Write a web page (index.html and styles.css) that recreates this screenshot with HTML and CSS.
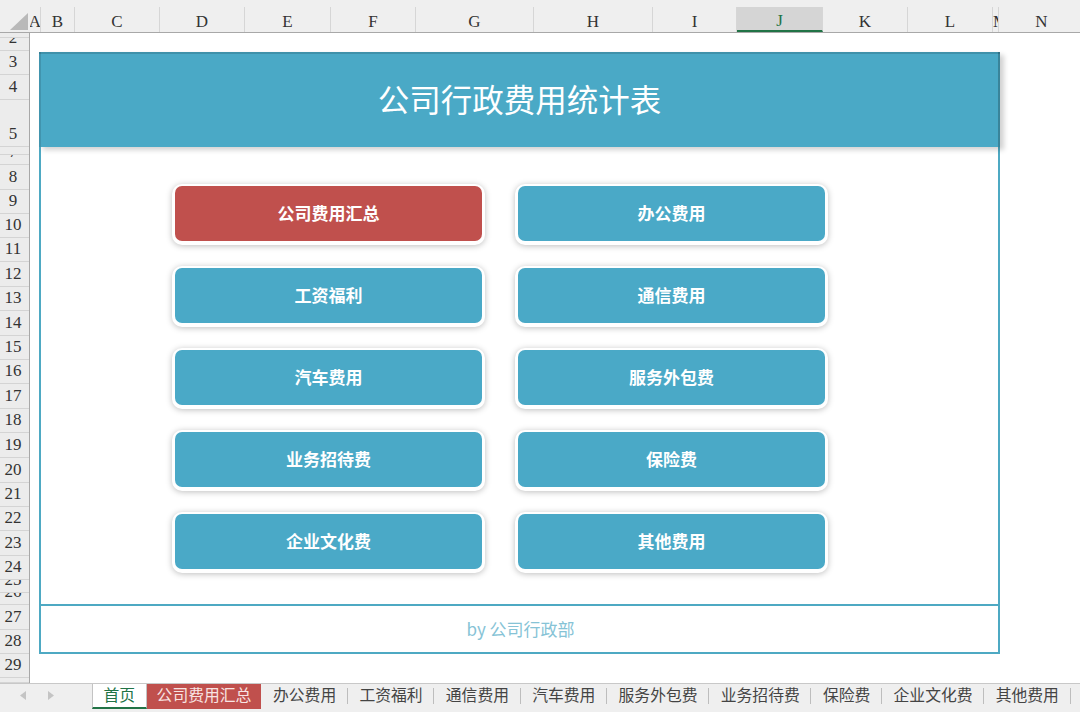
FILE: index.html
```html
<!DOCTYPE html>
<html lang="zh-CN">
<head>
<meta charset="utf-8">
<title>公司行政费用统计表</title>
<link rel="stylesheet" href="styles.css">
</head>
<body>
<div class="app">
  <div class="colhead">
    <div class="corner"><svg width="18" height="17" viewBox="0 0 18 17"><polygon points="18,0 18,17 0,17" fill="#b9b9b9"/></svg></div>
    <div class="col w11">A</div>
    <div class="col w34">B</div>
    <div class="col w85">C</div>
    <div class="col w85">D</div>
    <div class="col w86">E</div>
    <div class="col w85">F</div>
    <div class="col w118">G</div>
    <div class="col w119">H</div>
    <div class="col w84">I</div>
    <div class="col w86 selected">J</div>
    <div class="col w85">K</div>
    <div class="col w85">L</div>
    <div class="col w6">M</div>
    <div class="col w86">N</div>
  </div>
  <div class="main">
    <div class="rowhead">
      <div class="r h5">1</div>
      <div class="r h13">2</div>
      <div class="r h24">3</div>
      <div class="r h25">4</div>
      <div class="r h47">5</div>
      <div class="r h8">6</div>
      <div class="r h10">7</div>
      <div class="r h25">8</div>
      <div class="r h24">9</div>
      <div class="r h24">10</div>
      <div class="r h24">11</div>
      <div class="r h25">12</div>
      <div class="r h24">13</div>
      <div class="r h25">14</div>
      <div class="r h24">15</div>
      <div class="r h24">16</div>
      <div class="r h25">17</div>
      <div class="r h24">18</div>
      <div class="r h25">19</div>
      <div class="r h25">20</div>
      <div class="r h24">21</div>
      <div class="r h24">22</div>
      <div class="r h25">23</div>
      <div class="r h24">24</div>
      <div class="r h13">25</div>
      <div class="r h12">26</div>
      <div class="r h25">27</div>
      <div class="r h24">28</div>
      <div class="r h24">29</div>
      <div class="r h5">30</div>
    </div>
    <div class="canvas">
      <div class="board">
        <div class="banner"><h1>公司行政费用统计表</h1></div>
        <div class="panel">
          <div class="menu">
            <div class="btn red">公司费用汇总</div>
            <div class="btn">办公费用</div>
            <div class="btn">工资福利</div>
            <div class="btn">通信费用</div>
            <div class="btn">汽车费用</div>
            <div class="btn">服务外包费</div>
            <div class="btn">业务招待费</div>
            <div class="btn">保险费</div>
            <div class="btn">企业文化费</div>
            <div class="btn">其他费用</div>
          </div>
          <div class="foot">by 公司行政部</div>
        </div>
      </div>
    </div>
  </div>
  <div class="tabs">
    <div class="nav">
      <svg width="6" height="9" viewBox="0 0 6 9"><polygon points="6,0 6,9 0,4.5" fill="#c4c4c4"/></svg>
      <svg width="6" height="9" viewBox="0 0 6 9"><polygon points="0,0 0,9 6,4.5" fill="#c4c4c4"/></svg>
    </div>
    <div class="tab home">首页</div>
    <div class="tab active-red">公司费用汇总</div>
    <div class="tab">办公费用</div>
    <div class="tab">工资福利</div>
    <div class="tab">通信费用</div>
    <div class="tab">汽车费用</div>
    <div class="tab">服务外包费</div>
    <div class="tab">业务招待费</div>
    <div class="tab">保险费</div>
    <div class="tab">企业文化费</div>
    <div class="tab">其他费用</div>
  </div>
</div>
</body>
</html>
```
FILE: styles.css
```css
* { box-sizing: border-box; margin: 0; padding: 0; }
html, body { width: 1080px; height: 712px; overflow: hidden; background: #fff; }
body { font-family: "Noto Sans CJK SC", "Noto Sans", sans-serif; }

.app { display: grid; grid-template-rows: 33px 650px 29px; height: 712px; }

/* column header */
.colhead { display: flex; background: #efefef; border-bottom: 1px solid #a8a8a8; overflow: hidden; }
.corner { width: 30px; flex: none; display: flex; align-items: flex-end; justify-content: flex-end; padding: 0 2px 2px 0; }
.corner svg { display: block; }
.col { flex: none; height: 25px; margin-top: 7px; border-right: 1px solid #d6d6d6; display: flex; align-items: flex-end; justify-content: center; font: 17px/21px "Liberation Serif", serif; color: #333; overflow: hidden; }
.col.selected { background: #d5d5d5; border-bottom: 2px solid #217346; color: #217346; line-height: 19px; }
.w6 { width: 6px; justify-content: flex-start; }
.w11 { width: 11px; }
.w34 { width: 34px; }
.w84 { width: 84px; }
.w85 { width: 85px; }
.w86 { width: 86px; }
.w118 { width: 118px; }
.w119 { width: 119px; }

/* main sheet */
.main { display: flex; overflow: hidden; }
.rowhead { width: 30px; flex: none; background: #ececec; border-right: 1px solid #a8a8a8; display: flex; flex-direction: column; overflow: hidden; }
.r { flex: none; display: flex; align-items: flex-end; justify-content: center; padding-right: 3px; border-bottom: 1px solid #d4d4d4; overflow: hidden; font: 17px/24px "Liberation Serif", serif; color: #333; }
.h5 { height: 5px; }
.h8 { height: 8px; }
.h10 { height: 10px; }
.h12 { height: 12px; }
.h13 { height: 13px; }
.h24 { height: 24px; }
.h25 { height: 25px; }
.h47 { height: 47px; }

.canvas { flex: 1; padding: 19px 0 0 9px; background: #fff; overflow: hidden; }
.board { width: 961px; height: 602px; display: flex; flex-direction: column; }

.banner {
  height: 95px; flex: none; background: #4aa9c6;
  display: flex; align-items: center; justify-content: center;
  padding-bottom: 4px;
  position: relative; z-index: 1;
  box-shadow: inset 0 2px 0 rgba(0,0,0,0.14), inset 2px 0 0 rgba(0,0,0,0.12), inset -2px 0 0 rgba(0,0,0,0.22), 4px 3px 5px rgba(0,0,0,0.18);
}
.banner h1 { font-weight: 400; font-size: 31.5px; color: #fff; letter-spacing: 0; }

.panel { flex: 1; display: flex; flex-direction: column; border: 2px solid #4ea9c3; border-top: 0; }
.menu { flex: 1; display: grid; grid-template-columns: 307px 307px; grid-auto-rows: 55px; column-gap: 36px; row-gap: 27px; padding: 39px 0 0 134px; align-content: start; }
.btn {
  border-radius: 7px; background: #4aa9c7; color: #fff;
  font-weight: 700; font-size: 17px; padding-bottom: 2px;
  display: flex; align-items: center; justify-content: center;
  box-shadow: 0 1px 0 3px #fff, 0 2px 6px 3px rgba(0,0,0,0.26);
}
.btn.red { background: #c0504d; }
.foot { height: 48px; flex: none; border-top: 2px solid #4ea9c3; display: flex; align-items: center; justify-content: center; font-size: 17px; color: #86c3d6; padding: 0 0 2px 2px; }

/* sheet tabs */
.tabs { display: flex; align-items: flex-start; background: #efefef; border-top: 1px solid #c8c8c8; }
.nav { width: 92px; flex: none; display: flex; gap: 22px; padding: 7px 0 0 20px; }
.nav svg { display: block; }
.tab {
  flex: none; height: 25px; line-height: 22px; font-size: 15.8px; color: #444; padding: 0 11.6px 3px;
  background: linear-gradient(#bdbdbd, #bdbdbd) right 4px / 1px 16px no-repeat;
}
.tab.home { background: #fff; color: #217346; border-left: 1px solid #c3c3c3; border-right: 1px solid #c3c3c3; border-bottom: 2px solid #217346; padding: 0 10.5px; }
.tab.active-red { background: #c0504d; color: #f8e4e3; padding: 0 10px 3px; }
```
